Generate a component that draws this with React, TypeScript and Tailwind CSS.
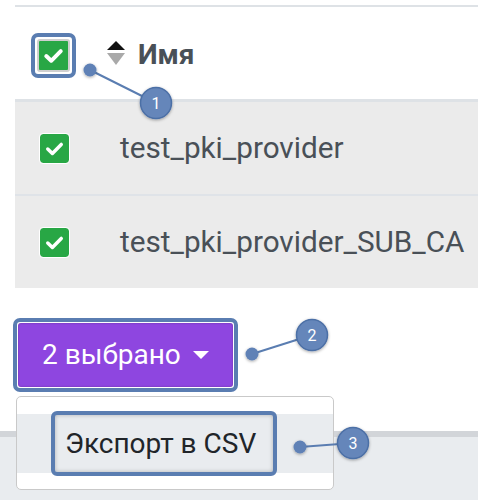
import React from 'react';

function Check({ size, w = 3.6 }: { size: number; w?: number }) {
  return (
    <svg width={size} height={size} viewBox="0 0 28 28">
      <path d="M7 14.5l4.8 4.6L21 9.8" fill="none" stroke="#fff" strokeWidth={w} strokeLinecap="round" strokeLinejoin="round" />
    </svg>
  );
}

function GreenBox() {
  return (
    <div className="w-[29px] h-[29px] rounded-[3px] bg-[#28a745] flex items-center justify-center outline outline-1 outline-white">
      <Check size={27} />
    </div>
  );
}

const rows = ['test_pki_provider', 'test_pki_provider_SUB_CA'];

const marks = [
  { dot: [90, 70], num: [156, 103], label: '1' },
  { dot: [252, 354], num: [312, 335], label: '2' },
  { dot: [300, 447], num: [353, 443], label: '3' },
];

export default function App() {
  return (
    <div className="relative w-[478px] h-[500px] overflow-hidden bg-white font-['Roboto','Liberation_Sans',sans-serif]">
      {/* table */}
      <div className="pl-[15px] pt-[5px]">
        <div className="border-t-2 border-[#dee2e6]">
          <div className="h-[95px] flex items-start pt-[26px] pl-[16px] border-b-[3px] border-[#dee2e6]">
            <div className="w-[45px] h-[45px] border-4 border-[#5a7db1] rounded-[7px] flex items-center justify-center">
              <div className="w-[33px] h-[33px] rounded-[3px] border-2 border-[#cfcfcf] bg-[#28a745] flex items-center justify-center">
                <Check size={33} w={3.8} />
              </div>
            </div>
            <svg width="18" height="28" viewBox="0 0 18 28" className="ml-[31px] mt-[8px]">
              <path d="M9 0L18 9H0Z" fill="#111" />
              <path d="M0 12H18L9 24Z" fill="#a9a9a9" />
            </svg>
            <span className="ml-[13px] mt-[8px] text-[28px] font-bold text-[#495057] leading-none">Имя</span>
          </div>
          {rows.map((r, i) => (
            <div
              key={r}
              className={`h-[92px] bg-[#ebebeb] flex items-center pl-[25px] ${i === 0 ? 'border-b-2 border-[#dfe3e8] h-[94px]' : ''}`}
            >
              <GreenBox />
              <span className="ml-[51px] text-[29.7px] text-[#495057] leading-none">{r}</span>
            </div>
          ))}
        </div>
      </div>

      {/* selection button */}
      <div className="mt-[30px] ml-[13px] w-[225px] h-[74px] border-4 border-[#5a7db1] rounded-[7px] p-[1px] flex">
        <div className="flex-1 rounded-[3px] bg-[#8e46e0] flex items-center pl-[24px] shadow-[inset_0_0_2px_rgba(0,0,0,0.3)]">
          <span className="text-[28px] text-white leading-none">2 выбрано</span>
          <svg width="16" height="8" viewBox="0 0 16 8" className="ml-[12px]">
            <path d="M0 0H16L8 8Z" fill="#fff" />
          </svg>
        </div>
      </div>

      {/* lower panel */}
      <div className="mt-[39px] h-[80px] border-t-[6px] border-[#d2d5d9] bg-[#e9ecef]" />

      {/* dropdown menu */}
      <div className="absolute left-[16px] top-[396px] w-[318px] h-[94px] bg-white border border-[#c9c9c9] rounded-[5px] pt-[17px]">
        <div className="h-[59px] bg-[#e9ecef] flex items-center pl-[34px]">
          <div className="w-[226px] h-[65px] shrink-0 border-4 border-[#5a7db1] rounded-[6px] bg-[#e9ecef] shadow-[inset_0_0_4px_rgba(0,0,0,0.25)] flex items-center pl-[10px]">
            <span className="text-[28px] text-[#212529] leading-none">Экспорт в CSV</span>
          </div>
        </div>
      </div>

      {/* annotation markers */}
      <svg className="absolute inset-0 pointer-events-none" width="478" height="500">
        <defs>
          <filter id="sh" x="-50%" y="-50%" width="200%" height="200%">
            <feDropShadow dx="0" dy="1" stdDeviation="1.5" floodColor="#000" floodOpacity="0.35" />
          </filter>
        </defs>
        {marks.map((m) => (
          <g key={m.label}>
            <line x1={m.dot[0]} y1={m.dot[1]} x2={m.num[0]} y2={m.num[1]} stroke="#5a7db1" strokeWidth="2" />
            <circle cx={m.dot[0]} cy={m.dot[1]} r="6.5" fill="#5f81b6" filter="url(#sh)" />
            <circle cx={m.num[0]} cy={m.num[1]} r="15.5" fill="#6586ba" stroke="#4c6fa6" strokeWidth="1.5" filter="url(#sh)" />
            <text
              x={m.num[0]}
              y={m.num[1] + 6}
              textAnchor="middle"
              fill="#fff"
              fontSize="16"
              fontFamily="Roboto, sans-serif"
            >
              {m.label}
            </text>
          </g>
        ))}
      </svg>
    </div>
  );
}
